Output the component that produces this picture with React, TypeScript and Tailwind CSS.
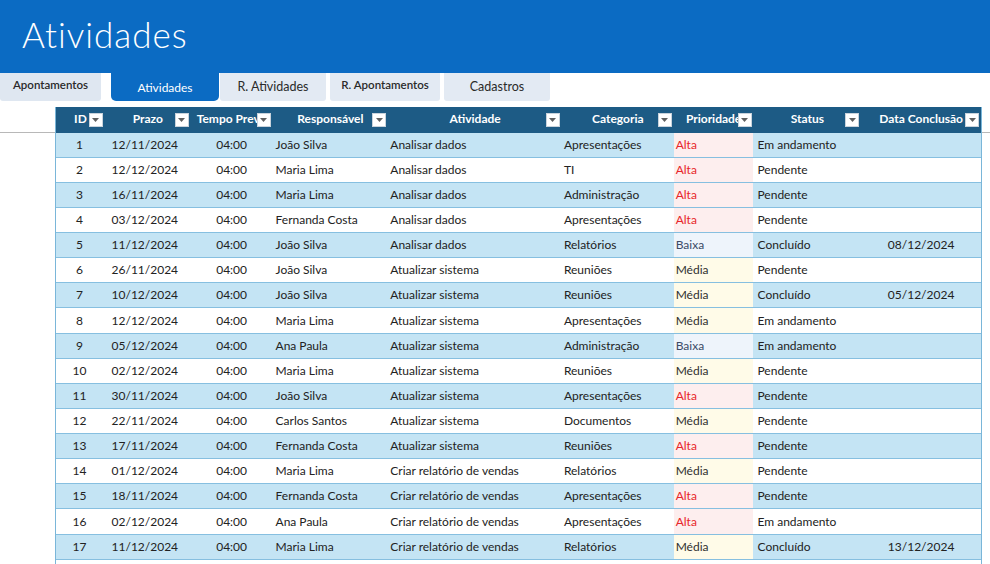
import React from "react";

type Row = [number, string, string, string, string, "Alta" | "Média" | "Baixa", string, string];

const rows: Row[] = [
  [1, "12/11/2024", "João Silva", "Analisar dados", "Apresentações", "Alta", "Em andamento", ""],
  [2, "12/12/2024", "Maria Lima", "Analisar dados", "TI", "Alta", "Pendente", ""],
  [3, "16/11/2024", "Maria Lima", "Analisar dados", "Administração", "Alta", "Pendente", ""],
  [4, "03/12/2024", "Fernanda Costa", "Analisar dados", "Apresentações", "Alta", "Pendente", ""],
  [5, "11/12/2024", "João Silva", "Analisar dados", "Relatórios", "Baixa", "Concluído", "08/12/2024"],
  [6, "26/11/2024", "João Silva", "Atualizar sistema", "Reuniões", "Média", "Pendente", ""],
  [7, "10/12/2024", "João Silva", "Atualizar sistema", "Reuniões", "Média", "Concluído", "05/12/2024"],
  [8, "12/12/2024", "Maria Lima", "Atualizar sistema", "Apresentações", "Média", "Em andamento", ""],
  [9, "05/12/2024", "Ana Paula", "Atualizar sistema", "Administração", "Baixa", "Em andamento", ""],
  [10, "02/12/2024", "Maria Lima", "Atualizar sistema", "Reuniões", "Média", "Pendente", ""],
  [11, "30/11/2024", "João Silva", "Atualizar sistema", "Apresentações", "Alta", "Pendente", ""],
  [12, "22/11/2024", "Carlos Santos", "Atualizar sistema", "Documentos", "Média", "Pendente", ""],
  [13, "17/11/2024", "Fernanda Costa", "Atualizar sistema", "Reuniões", "Alta", "Pendente", ""],
  [14, "01/12/2024", "Maria Lima", "Criar relatório de vendas", "Relatórios", "Média", "Pendente", ""],
  [15, "18/11/2024", "Fernanda Costa", "Criar relatório de vendas", "Apresentações", "Alta", "Pendente", ""],
  [16, "02/12/2024", "Ana Paula", "Criar relatório de vendas", "Apresentações", "Alta", "Em andamento", ""],
  [17, "11/12/2024", "Maria Lima", "Criar relatório de vendas", "Relatórios", "Média", "Concluído", "13/12/2024"],
];

function FilterBtn() {
  return (
    <span className="absolute right-[2px] top-[6px] flex h-[14px] w-[14px] items-center justify-center border border-[#c9d3dc] bg-white">
      <svg width="7" height="4" viewBox="0 0 7 4">
        <path d="M0 0 L7 0 L3.5 4 Z" fill="#606060" />
      </svg>
    </span>
  );
}

const headers: { label: string; w: string; align?: string }[] = [
  { label: "ID", w: "w-[49px]" },
  { label: "Prazo", w: "w-[86px]" },
  { label: "Tempo Prev", w: "w-[82px]", align: "left" },
  { label: "Responsável", w: "w-[116px]" },
  { label: "Atividade", w: "w-[174px]" },
  { label: "Categoria", w: "w-[112px]" },
  { label: "Prioridade", w: "w-[80px]" },
  { label: "Status", w: "w-[108px]" },
  { label: "Data Conclusão", w: "w-[120px]" },
];

function prioStyle(p: string) {
  if (p === "Alta") return "bg-[#fdeeee] text-[#e8262a]";
  if (p === "Média") return "bg-[#fffbe8] text-[#303030]";
  return "bg-[#eef4fb] text-[#3b4a66]";
}

export default function App() {
  return (
    <div
      className="h-[564px] w-[990px] overflow-hidden bg-white"
      style={{ fontFamily: "Lato, 'Liberation Sans', sans-serif" }}
    >
      <div className="flex h-[73px] items-center bg-[#0b6bc3] pl-[22px]">
        <h1 className="mt-[-4px] text-[35px] font-light tracking-[1px] text-white">Atividades</h1>
      </div>

      <div className="flex h-[28px] items-stretch text-[11.5px]">
        <div className="flex w-[101px] items-center justify-center rounded-b-[3px] bg-[#dfe7f1] pb-[4px] font-semibold text-[#2a2a2a]">
          Apontamentos
        </div>
        <div className="ml-[10px] flex w-[108px] items-center justify-center rounded-b-[5px] bg-[#0b6bc3] pt-[1px] text-[12px] text-white">
          Atividades
        </div>
        <div className="ml-[1px] flex w-[106px] items-center justify-center rounded-b-[3px] bg-[#e3eaf3] pt-[1px] text-[12.5px] text-[#2a2a2a]">
          R. Atividades
        </div>
        <div className="ml-[4px] flex w-[110px] items-center justify-center rounded-b-[3px] bg-[#e3eaf3] pb-[4px] font-semibold text-[#2a2a2a]">
          R. Apontamentos
        </div>
        <div className="ml-[4px] flex w-[106px] items-center justify-center rounded-b-[3px] bg-[#e3eaf3] pt-[1px] text-[12.5px] text-[#2a2a2a]">
          Cadastros
        </div>
      </div>

      <div className="mt-[6px] flex items-start">
        <div className="h-[26px] w-[55px] border-b border-[#b8b8b8]" />
        <div className="w-[927px] border-x border-[#7ab6d9] text-[12px] text-[#222]">
          <div className="flex h-[26px] bg-[#1d5b85] text-[12px] font-bold text-white">
            {headers.map((h) => (
              <div key={h.label} className={`relative ${h.w} flex items-center overflow-hidden pb-[3px]`}>
                <span
                  className={
                    h.align === "left"
                      ? "whitespace-nowrap pl-[6px]"
                      : "w-full whitespace-nowrap text-center"
                  }
                >
                  {h.label}
                </span>
                <FilterBtn />
              </div>
            ))}
          </div>
          {rows.map((r, i) => (
            <div
              key={r[0]}
              className={`flex ${i % 8 === 7 ? "h-[26px]" : "h-[25px]"} border-b border-[#86bfe0] ${i % 2 === 0 ? "bg-[#c4e4f4]" : "bg-white"}`}
            >
              <div className="flex w-[49px] items-center justify-center pr-[2px]">{r[0]}</div>
              <div className="flex w-[86px] items-center justify-center pr-[6px]">{r[1]}</div>
              <div className="flex w-[82px] items-center justify-center">04:00</div>
              <div className="flex w-[116px] items-center pl-[3px]">{r[2]}</div>
              <div className="flex w-[174px] items-center pl-[2px]">{r[3]}</div>
              <div className="flex w-[112px] items-center pl-[2px]">{r[4]}</div>
              <div className={`flex w-[80px] items-center pl-[2px] ${prioStyle(r[5])}`}>{r[5]}</div>
              <div className="flex w-[108px] items-center pl-[4px]">{r[6]}</div>
              <div className="flex w-[120px] items-center justify-center">{r[7]}</div>
            </div>
          ))}
          <div className="h-[25px] bg-white" />
        </div>
        <div className="h-[26px] flex-1 border-b border-[#b8b8b8]" />
      </div>
    </div>
  );
}
